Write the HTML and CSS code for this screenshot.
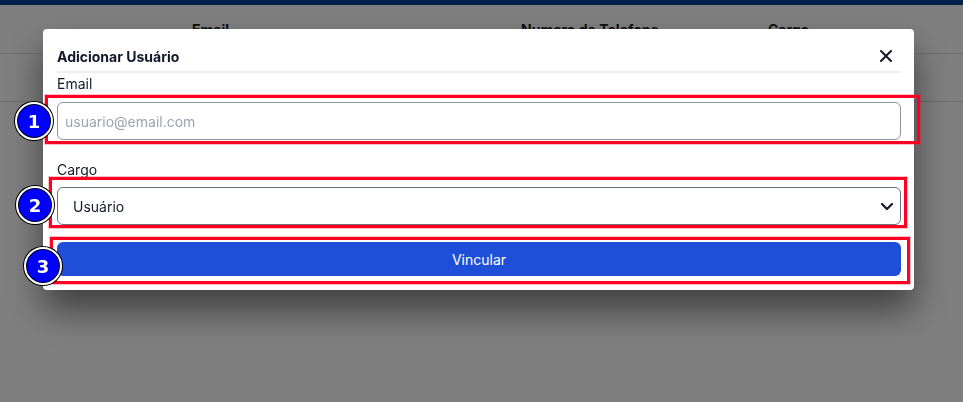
FILE: index.html
```html
<!DOCTYPE html>
<html lang="pt-BR">
<head>
<meta charset="utf-8">
<title>Adicionar Usuário</title>
<link rel="stylesheet" href="styles.css">
</head>
<body>
<div class="topbar"></div>
<div class="table-head">
  <span class="col col-email">Email</span>
  <span class="col col-phone">Numero de Telefone</span>
  <span class="col col-role">Cargo</span>
</div>
<div class="table-row"></div>

<div class="overlay">
  <div class="modal">
    <div class="modal-header">
      <h2 class="modal-title">Adicionar Usuário</h2>
      <button class="close-btn" aria-label="Fechar">
        <svg width="12" height="12" viewBox="0 0 12 12"><path d="M1 1L11 11M11 1L1 11" stroke="#111827" stroke-width="2" stroke-linecap="round" fill="none"/></svg>
      </button>
    </div>
    <label class="field-label label-email">Email</label>
    <input class="text-input" type="email" placeholder="usuario@email.com">
    <label class="field-label label-cargo">Cargo</label>
    <div class="select">
      <span>Usuário</span>
      <svg width="14" height="9" viewBox="0 0 14 9"><path d="M2 2L7 7L12 2" stroke="#111827" stroke-width="2.2" stroke-linecap="round" stroke-linejoin="round" fill="none"/></svg>
    </div>
    <button class="submit-btn">Vincular</button>

    <div class="mark box-1"></div>
    <div class="mark box-2"></div>
    <div class="mark box-3"></div>
    <div class="badge badge-1">1</div>
    <div class="badge badge-2">2</div>
    <div class="badge badge-3">3</div>
  </div>
</div>
</body>
</html>
```
FILE: styles.css
```css
* { box-sizing: border-box; }
html, body { margin: 0; padding: 0; }
body {
  width: 963px;
  height: 402px;
  overflow: hidden;
  background: #ffffff;
  font-family: Inter, "Noto Sans", Arial, sans-serif;
  color: #111827;
}
.topbar { height: 5px; background: #004294; }
.table-head {
  height: 49px;
  display: flex;
  align-items: center;
  border-bottom: 1px solid #dcdcdc;
  font-weight: 700;
  font-size: 14px;
  color: #222;
}
.col-email { margin-left: 192px; }
.col-phone { margin-left: 292px; }
.col-role { margin-left: 109px; }
.table-row { height: 48px; border-bottom: 1px solid #dcdcdc; }

.overlay {
  position: fixed;
  inset: 0;
  background: rgba(0, 0, 0, 0.5);
}
.modal {
  position: absolute;
  left: 43px;
  top: 29px;
  width: 871px;
  height: 261px;
  background: #fff;
  border-radius: 4px;
  padding: 0 13px 0 14px;
  display: flex;
  flex-direction: column;
  box-shadow: 0 20px 36px rgba(0, 0, 0, 0.5);
}
.modal-header {
  height: 44px;
  display: flex;
  align-items: center;
  justify-content: space-between;
  border-bottom: 2px solid #eeeeee;
  padding-top: 12px;
}
.modal-title {
  margin: 0;
  font-size: 14px;
  font-weight: 700;
  color: #111827;
}
.close-btn {
  border: 0;
  background: transparent;
  padding: 0;
  margin-right: 9px;
  width: 12px;
  height: 12px;
  display: flex;
}
.field-label {
  font-size: 14px;
  line-height: 20px;
  color: #111827;
}
.label-email { margin-top: 1px; }
.label-cargo { margin-top: 20px; }
.text-input {
  margin-top: 8px;
  height: 38px;
  width: 100%;
  border: 1px solid #8f939c;
  border-radius: 6px;
  padding: 0 7px;
  font-family: inherit;
  font-size: 14px;
  color: #111827;
  outline: none;
}
.text-input::placeholder { color: #9ca3af; }
.select {
  margin-top: 7px;
  height: 38px;
  border: 1px solid #6b7280;
  border-radius: 6px;
  padding: 0 6px 0 15px;
  display: flex;
  align-items: center;
  justify-content: space-between;
  font-size: 14px;
  color: #111827;
}
.submit-btn {
  margin-top: 17px;
  height: 34px;
  width: 100%;
  border: 0;
  border-radius: 6px;
  background: #1f4fd8;
  color: #ffffff;
  font-family: inherit;
  font-size: 14px;
  font-weight: 400;
}

.mark {
  position: absolute;
  border: 3px solid #ff0022;
  box-shadow: 0 0 0 1px rgba(255, 0, 40, 0.25);
}
.box-1 { left: 2px; top: 66px; width: 875px; height: 49px; }
.box-2 { left: 6px; top: 148px; width: 858px; height: 51px; }
.box-3 { left: 7px; top: 208px; width: 860px; height: 47px; }

.badge {
  position: absolute;
  width: 38px;
  height: 38px;
  border-radius: 50%;
  background: #0000ff;
  border: 2px solid #ffffff;
  box-shadow: 0 0 0 1px #000000, inset 0 0 0 1px #000;
  color: #ffffff;
  font-family: "DejaVu Sans", sans-serif;
  font-weight: 700;
  font-size: 18px;
  display: flex;
  align-items: center;
  justify-content: center;
}
.badge-1 { left: -28px; top: 73px; }
.badge-2 { left: -27px; top: 157px; }
.badge-3 { left: -19px; top: 218px; }
```
